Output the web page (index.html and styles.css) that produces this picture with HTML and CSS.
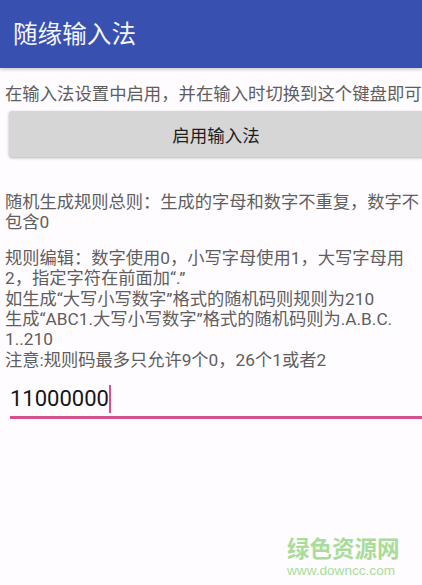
FILE: index.html
```html
<!DOCTYPE html>
<html lang="zh">
<head>
<meta charset="utf-8">
<title>随缘输入法</title>
<link rel="stylesheet" href="styles.css">
</head>
<body>
<div class="app">
  <header class="appbar">随缘输入法</header>
  <main class="content">
    <p class="hint">在输入法设置中启用，并在输入时切换到这个键盘即可</p>
    <button class="btn" type="button">启用输入法</button>
    <p class="para first">随机生成规则总则：生成的字母和数字不重复，数字不<br>包含0</p>
    <p class="para second">规则编辑：数字使用0，小写字母使用1，大写字母用<br>2，指定字符在前面加“.”<br>如生成“大写小写数字”格式的随机码则规则为210<br>生成“ABC1.大写小写数字”格式的随机码则为.A.B.C.<br>1..210<br>注意:规则码最多只允许9个0，26个1或者2</p>
    <div class="field"><span class="value">11000000</span><span class="caret"></span></div>
  </main>
  <div class="mark">
    <span class="mark-cn">绿色资源网</span>
    <span class="mark-url">www.downcc.com</span>
  </div>
</div>
</body>
</html>
```

FILE: styles.css
```css
html, body { margin: 0; padding: 0; }
body {
  width: 422px;
  height: 585px;
  overflow: hidden;
  background: #fefcfe;
  font-family: Roboto, "Noto Sans CJK SC", sans-serif;
}
.app { position: relative; width: 422px; height: 585px; overflow: hidden; }
.appbar {
  height: 68px;
  box-sizing: border-box;
  padding: 12px 0 0 13px;
  background: #3850b0;
  color: #f4f5fb;
  font-size: 24.6px;
  line-height: 40px;
  font-family: "Noto Sans CJK SC", sans-serif;
  box-shadow: 0 2px 3px rgba(0,0,0,.18);
}
.content { padding: 0 0 0 5px; color: #5e5e5e; }
.hint {
  margin: 13px 0 0;
  font-size: 17.36px;
  line-height: 24px;
  white-space: nowrap;
  font-family: "Noto Sans CJK SC", sans-serif;
}
.btn {
  display: block;
  width: 422px;
  height: 46px;
  margin: 6px 0 0 4px;
  padding: 0 8px 0 0;
  border: 0;
  border-radius: 3px;
  background: #d6d6d6;
  color: #1e1e1e;
  font-size: 17.5px;
  font-family: "Noto Sans CJK SC", sans-serif;
  box-shadow: 0 1px 3px rgba(0,0,0,.3);
}
.para {
  margin: 0;
  font-size: 17.25px;
  line-height: 20.4px;
  white-space: nowrap;
  font-family: Roboto, "Noto Sans CJK SC", sans-serif;
}
.first { margin-top: 35px; }
.second { margin-top: 15px; }
.field {
  display: flex;
  align-items: center;
  height: 34px;
  margin: 12px 0 0 5px;
  border-bottom: 3px solid #d6508e;
  color: #151515;
  font-size: 22px;
  font-family: Roboto, sans-serif;
}
.value { line-height: 30px; }
.caret { width: 2px; height: 28px; background: #d6508e; }
.mark {
  position: absolute;
  left: 287px;
  top: 534px;
  display: flex;
  flex-direction: column;
  color: #a9dc9a;
}
.mark-cn { font-size: 22.5px; line-height: 26px; font-weight: 700; font-family: "Noto Sans CJK SC", sans-serif; white-space: nowrap; }
.mark-url { font-size: 13.6px; line-height: 16px; margin-top: 3px; white-space: nowrap; font-family: "Liberation Sans", sans-serif; }
```
